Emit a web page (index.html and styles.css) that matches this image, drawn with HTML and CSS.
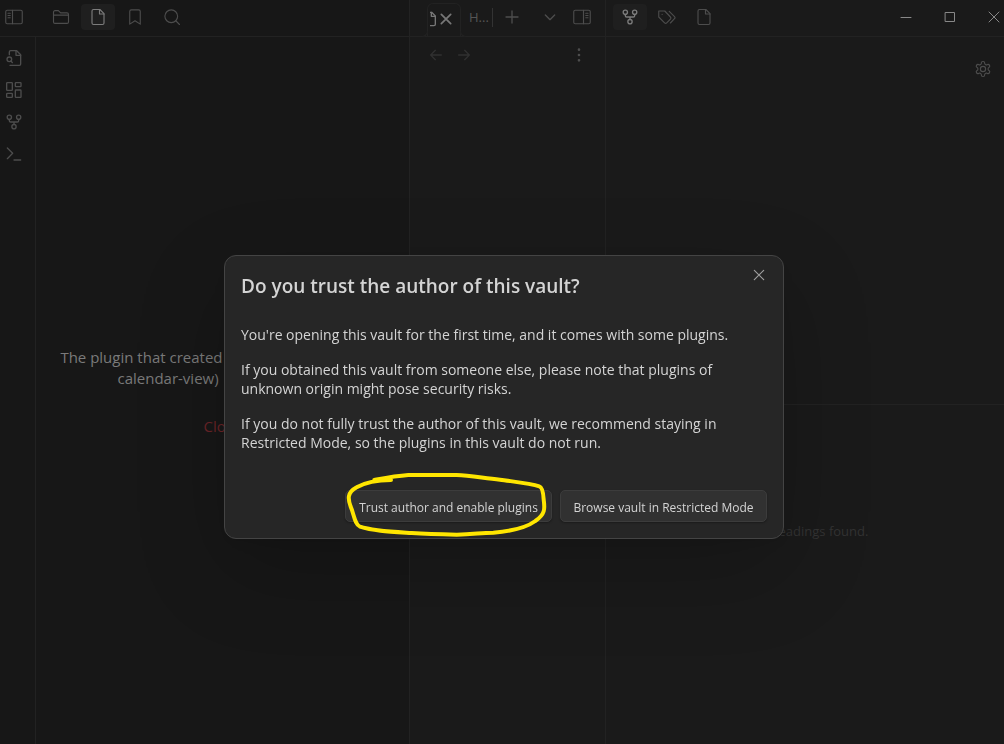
FILE: index.html
```html
<!DOCTYPE html>
<html lang="en">
<head>
<meta charset="utf-8">
<title>Vault</title>
<link rel="stylesheet" href="styles.css">
</head>
<body>
<svg class="defs" aria-hidden="true">
  <symbol id="file" viewBox="0 0 24 24"><path d="M14.5 2H6a2 2 0 0 0-2 2v16a2 2 0 0 0 2 2h12a2 2 0 0 0 2-2V7.500L14.500 2z"/><path d="M14 2v6h6"/></symbol>
  <symbol id="fork" viewBox="0 0 24 24"><circle cx="12" cy="19" r="3.200"/><circle cx="5" cy="5" r="3.200"/><circle cx="19" cy="5" r="3.200"/><path d="M19 8.200v1.800a2 2 0 0 1-2 2H7a2 2 0 0 1-2-2V8.200M12 12v3.800"/></symbol>
  <symbol id="close" viewBox="0 0 24 24"><path d="M20 4 4 20M4 4l16 16"/></symbol>
</svg>
<main class="app">
  <section class="left">
    <header class="bar">
      <button class="icon-btn edge" aria-label="Toggle left sidebar"><svg viewBox="0 0 24 24"><rect x="1" y="3" width="22" height="18" rx="2"/><path d="M10 3v18M4 7h3M4 10h3M4 13h3"/></svg></button>
      <nav class="group">
        <button class="icon-btn" aria-label="Files"><svg viewBox="0 0 24 24"><path d="M22 9.500V18.500a2 2 0 0 1-2 2H4a2 2 0 0 1-2-2v-13a2 2 0 0 1 2-2h4.500l3 3H20a2 2 0 0 1 2 2v1H2"/></svg></button>
        <button class="icon-btn active" aria-label="Calendar view"><svg><use href="#file"/></svg></button>
        <button class="icon-btn" aria-label="Bookmarks"><svg viewBox="0 0 24 24"><path d="m19 21.500-7-4.500-7 4.500v-17a2 2 0 0 1 2-2h10a2 2 0 0 1 2 2v17z"/></svg></button>
        <button class="icon-btn" aria-label="Search"><svg viewBox="0 0 24 24"><circle cx="11" cy="11" r="8.500"/><path d="m22 22-5-5"/></svg></button>
      </nav>
    </header>
    <div class="left-body">
      <nav class="ribbon">
        <button class="icon-btn edge" aria-label="Open quick switcher"><svg viewBox="0 0 24 24"><path d="M5 7V3a2 2 0 0 1 2-2h9l6 6v14a2 2 0 0 1-2 2H6"/><path d="M15 1v7h7"/><circle cx="5" cy="14" r="3.500"/><path d="m9.500 19-2-2.500"/></svg></button>
        <button class="icon-btn edge" aria-label="Create new canvas"><svg viewBox="0 0 24 24"><rect x="1" y="1" width="8.500" height="11.500" rx="1"/><rect x="14" y="1" width="8.500" height="6" rx="1"/><rect x="14" y="12" width="8.500" height="11" rx="1"/><rect x="1" y="17" width="8.500" height="6" rx="1"/></svg></button>
        <button class="icon-btn edge" aria-label="Open graph view"><svg><use href="#fork"/></svg></button>
        <button class="icon-btn edge" aria-label="Open command palette"><svg viewBox="0 0 24 24"><path d="m2 19 8-8-8-8M12 21h10"/></svg></button>
      </nav>
      <div class="missing">
        <p>The plugin that created<br>calendar-view)&nbsp;</p>
        <button class="close-view">Close</button>
      </div>
    </div>
  </section>
  <section class="center">
    <header class="bar tabs">
      <div class="tab">
        <span class="tab-icon"><svg><use href="#file"/></svg></span>
        <button class="tab-close" aria-label="Close tab"><svg><use href="#close"/></svg></button>
      </div>
      <button class="tab-idle">H...</button>
      <button class="tool plus" aria-label="New tab"><svg viewBox="0 0 24 24"><path d="M12 3v18M3 12h18"/></svg></button>
      <button class="tool down" aria-label="Tab list"><svg viewBox="0 0 24 24"><path d="m5 9 7 7 7-7"/></svg></button>
      <button class="tool" aria-label="Toggle right sidebar"><svg viewBox="0 0 24 24"><rect x="1" y="3" width="22" height="18" rx="2"/><path d="M14 3v18M17 7h3M17 10h3M17 13h3"/></svg></button>
    </header>
    <div class="view-nav">
      <button class="tool dim" aria-label="Back"><svg viewBox="0 0 24 24"><path d="m11 5-7 7 7 7M4 12h16"/></svg></button>
      <button class="tool dim" aria-label="Forward"><svg viewBox="0 0 24 24"><path d="m13 5 7 7-7 7M20 12H4"/></svg></button>
      <button class="tool more" aria-label="More options"><svg viewBox="0 0 24 24"><circle cx="12" cy="4" r="1"/><circle cx="12" cy="12" r="1"/><circle cx="12" cy="20" r="1"/></svg></button>
    </div>
  </section>
  <section class="right">
    <header class="bar">
      <nav class="group">
        <button class="icon-btn active" aria-label="Graph"><svg><use href="#fork"/></svg></button>
        <button class="icon-btn" aria-label="Tags"><svg viewBox="0 0 24 24"><path d="M9 4H1v8l7.800 7.800a2 2 0 0 0 2.800 0l5-5a2 2 0 0 0 0-2.800z"/><path d="M5.500 8.500v.2M15 4.500l7 7a2 2 0 0 1 0 2.800L16.500 20"/></svg></button>
        <button class="icon-btn" aria-label="Outline"><svg><use href="#file"/></svg></button>
      </nav>
      <div class="window-controls">
        <button aria-label="Minimize"><svg viewBox="0 0 10 10"><path d="M0 5.500h10"/></svg></button>
        <button aria-label="Maximize"><svg viewBox="0 0 10 10"><path d="M.5.5h9v9h-9z"/></svg></button>
        <button aria-label="Close window"><svg viewBox="0 0 10 10"><path d="m0 0 10 10M10 0 0 10"/></svg></button>
      </div>
    </header>
    <div class="graph">
      <button class="tool" aria-label="Graph settings"><svg viewBox="0 0 24 24"><path d="M12.200 2h-.4a2 2 0 0 0-2 2v.2a2 2 0 0 1-1 1.700l-.4.300a2 2 0 0 1-2 0l-.2-.1a2 2 0 0 0-2.700.7l-.2.400a2 2 0 0 0 .7 2.700l.2.100a2 2 0 0 1 1 1.700v.5a2 2 0 0 1-1 1.800l-.2.100a2 2 0 0 0-.7 2.700l.2.400a2 2 0 0 0 2.700.7l.2-.1a2 2 0 0 1 2 0l.4.300a2 2 0 0 1 1 1.700v.2a2 2 0 0 0 2 2h.4a2 2 0 0 0 2-2v-.2a2 2 0 0 1 1-1.700l.4-.3a2 2 0 0 1 2 0l.2.100a2 2 0 0 0 2.700-.7l.2-.4a2 2 0 0 0-.7-2.700l-.2-.1a2 2 0 0 1-1-1.800v-.5a2 2 0 0 1 1-1.700l.2-.1a2 2 0 0 0 .7-2.700l-.2-.4a2 2 0 0 0-2.700-.7l-.2.100a2 2 0 0 1-2 0l-.4-.3a2 2 0 0 1-1-1.700V4a2 2 0 0 0-2-2z"/><circle cx="12" cy="12" r="3.500"/></svg></button>
    </div>
    <div class="outline"><p>No headings found.</p></div>
  </section>
</main>
<div class="overlay">
  <div class="modal" role="dialog" aria-modal="true" aria-labelledby="modal-title">
    <div class="modal-head">
      <h1 id="modal-title">Do you trust the author of this vault?</h1>
      <button class="modal-close" aria-label="Close dialog"><svg><use href="#close"/></svg></button>
    </div>
    <div class="modal-text">
      <p>You're opening this vault for the first time, and it comes with some plugins.</p>
      <p>If you obtained this vault from someone else, please note that plugins of<br>unknown origin might pose security risks.</p>
      <p>If you do not fully trust the author of this vault, we recommend staying in<br>Restricted Mode, so the plugins in this vault do not run.</p>
    </div>
    <div class="actions">
      <div class="marked">
        <button class="action">Trust author and enable plugins</button>
        <svg class="scribble" viewBox="0 0 720 300" aria-hidden="true"><path d="M183 60C150 60 108 66 80 82C50 98 54 118 62 140C72 162 74 194 90 200C130 213 180 215 245 219C290 222 330 223 380 224C430 224 450 218 490 218C540 214 590 202 616 183C650 160 643 140 641 118C640 100 638 82 628 79C600 70 550 65 510 59C460 54 420 47 380 45H235C195 48 165 54 133 60"/></svg>
      </div>
      <button class="action">Browse vault in Restricted Mode</button>
    </div>
  </div>
</div>
</body>
</html>
```
FILE: styles.css
```css
* { box-sizing: border-box; }
body {
  margin: 0;
  background: #1a1a1a;
  color: #4d4d4d;
  font: 14px/19px "Open Sans", "Noto Sans", sans-serif;
}
p, h1 { margin: 0; }
button {
  margin: 0;
  padding: 0;
  border: 0;
  background: none;
  color: inherit;
  font: inherit;
}
svg {
  display: block;
  width: 18px;
  height: 18px;
  fill: none;
  stroke: currentColor;
  stroke-width: 2;
  stroke-linecap: round;
  stroke-linejoin: round;
}
.defs { display: none; }

.app {
  display: grid;
  grid-template-columns: 410fr 196fr 398fr;
  min-height: 100vh;
}
.left, .center, .right {
  display: flex;
  flex-direction: column;
  min-width: 0;
}
.left { background: #171717; }
.left, .center { border-right: 1px solid #222; }

.bar {
  display: flex;
  align-items: center;
  height: 37px;
  padding-bottom: 2px;
  border-bottom: 1px solid #222;
}
.group { display: flex; gap: 3px; }
.left .group { margin-left: 16px; }
.right .group { margin-left: 7px; }
.icon-btn {
  display: flex;
  align-items: center;
  justify-content: center;
  width: 34px;
  height: 26px;
  border-radius: 4px;
}
.icon-btn svg { stroke-width: 1.5; }
.icon-btn.edge { width: 28px; }
.icon-btn.active { background: #1f1f1f; color: #7c7c7c; }
.right .active svg, .ribbon svg { width: 16px; height: 16px; stroke-width: 2; }

.left-body { display: flex; flex: 1; }
.ribbon {
  display: flex;
  flex-direction: column;
  gap: 6px;
  width: 36px;
  padding-top: 8px;
  border-right: 1px solid #222;
}
.missing {
  display: flex;
  flex: 1;
  flex-direction: column;
  align-items: center;
  justify-content: center;
  gap: 27px;
  padding-top: 2px;
  color: #7a7a7a;
  font-size: 15px;
  line-height: 21px;
  white-space: nowrap;
}
.missing p {
  align-self: flex-start;
  width: 50%;
  text-align: right;
}
.close-view { color: #6b2428; }

.tabs { padding-left: 17px; }
.tab {
  position: relative;
  display: flex;
  align-items: center;
  align-self: flex-start;
  width: 34px;
  height: 33px;
  margin-top: 3px;
  margin-bottom: -3px;
  padding: 0 0 3px 2px;
  border: 1px solid #222;
  border-bottom: 0;
  border-radius: 6px 6px 0 0;
  background: #1a1a1a;
  color: #777;
}
.tab::before, .tab::after {
  content: "";
  position: absolute;
  bottom: -1px;
  width: 6px;
  height: 6px;
  border-bottom: 1px solid #222;
  background: #1a1a1a;
}
.tab::before { right: 100%; border-right: 1px solid #222; border-bottom-right-radius: 6px; }
.tab::after { left: 100%; border-left: 1px solid #222; border-bottom-left-radius: 6px; }
.tab-icon { display: flex; justify-content: flex-end; width: 8px; overflow: hidden; }
.tab-icon svg { flex: none; width: 16px; height: 16px; }
.tab-close { margin-left: 1px; }
.tab-close svg { width: 14px; height: 14px; stroke-width: 3; }
.tab-idle {
  width: 32px;
  padding-left: 8px;
  border-right: 1px solid #333;
  color: #555;
  font-size: 13px;
  text-align: left;
}
.tool svg { stroke-width: 1.5; }
.plus { margin-left: 11px; }
.plus svg, .down svg { width: 16px; height: 16px; stroke-width: 2; }
.down { margin-left: auto; margin-right: 15px; }
.tabs > :last-child { margin-right: 14px; }

.view-nav {
  display: flex;
  align-items: center;
  gap: 12px;
  height: 36px;
  padding: 0 18px;
}
.view-nav svg { width: 16px; height: 16px; stroke-width: 2; }
.view-nav .dim { color: #303030; }
.more { margin-left: auto; }

.window-controls {
  display: flex;
  gap: 24px;
  margin-left: auto;
  color: #888;
}
.window-controls button { display: flex; justify-content: center; width: 20px; }
.window-controls svg { width: 10px; height: 10px; overflow: visible; stroke-width: 1; }
.graph {
  display: flex;
  flex: none;
  align-items: flex-start;
  justify-content: flex-end;
  height: calc(52vh - 19px);
  padding: 23px 12px 0;
  border-bottom: 1px solid #222;
}
.outline {
  flex: 1;
  padding: 117px 0 0 8px;
  color: #333;
  font-size: 13px;
  text-align: center;
}

.overlay {
  position: fixed;
  inset: 0;
  display: flex;
  align-items: center;
  justify-content: center;
  padding: 50px 0 0 4px;
}
.modal {
  width: 560px;
  max-width: 90vw;
  padding: 16px;
  border: 1px solid #444;
  border-radius: 12px;
  background: #262626;
  box-shadow: 0 2px 3px rgba(0, 0, 0, .03), 0 6px 16px rgba(0, 0, 0, .06), 0 30px 90px rgba(0, 0, 0, .2);
  color: #d4d4d4;
}
.modal-head { display: flex; justify-content: space-between; }
h1 { font-size: 19px; font-weight: 600; line-height: 28px; }
.modal-close { align-self: flex-start; padding-right: 1px; color: #a0a0a0; }
.modal-close svg { width: 14px; height: 14px; margin-top: -4px; }
.modal-text { display: grid; gap: 16px; margin-top: 25px; }
.actions {
  display: flex;
  justify-content: flex-end;
  gap: 8px;
  margin-top: 38px;
}
.marked { position: relative; }
.action {
  min-width: 207px;
  height: 32px;
  padding: 2px 11px 0;
  border: 1px solid #3c3c3c;
  border-radius: 5px;
  background: #313131;
  box-shadow: 0 1px 2px rgba(0, 0, 0, .3);
  color: #d4d4d4;
  font-size: 12px;
}
.scribble {
  position: absolute;
  top: -30px;
  left: -15px;
  width: 240px;
  height: 100px;
  stroke: #ffe600;
  stroke-width: 12;
  pointer-events: none;
}
```
